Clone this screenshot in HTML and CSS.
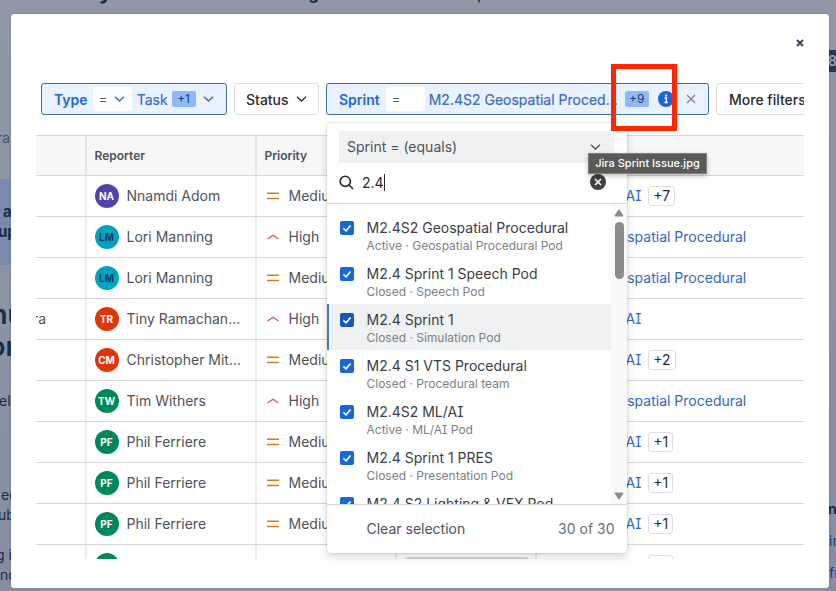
FILE: index.html
```
<!DOCTYPE html>
<html lang="en">
<head>
    <meta charset="UTF-8">
    <meta name="viewport" content="width=device-width, initial-scale=1.0">
    <title>Jira Sprint Issue.jpg</title>
    <link rel="stylesheet" href="styles.css">
</head>
<body>
    <!-- article behind the lightbox -->
    <div class="page">
        <div class="page-title"><span>y</span><span class="title-g">g</span><span class="title-p">p</span></div>
        <div class="page-left">
            <p class="meta">ra</p>
            <div class="note"><p>a</p><p>up</p></div>
            <h2><span>nu</span><br><span class="or">or</span></h2>
            <p class="line-el">el</p>
            <p class="line-ec">ec</p>
            <p class="line-ub">ub</p>
            <p class="line-g">g i</p>
            <p class="line-nc">nc</p>
        </div>
        <div class="page-right">
            <span class="count">8</span>
            <strong>n</strong>
            <a>in</a>
            <a>fr</a>
        </div>
    </div>

    <div class="modal">
        <div class="modal-head">
            <svg class="modal-close" width="8" height="8" viewBox="0 0 8 8"><path d="M1 1l6 6M7 1L1 7"/></svg>
        </div>
        <div class="shot">
            <div class="filters">
                <div class="filter active type">
                    <b>Type</b>
                    <span class="op">= <svg width="11" height="6" viewBox="0 0 11 6"><path d="M1 .8l4.5 4.2L10 .8"/></svg></span>
                    <span class="value">Task</span>
                    <span class="more">+1</span>
                    <svg class="chev" width="11" height="6" viewBox="0 0 11 6"><path d="M1 .8l4.5 4.2L10 .8"/></svg>
                </div>
                <div class="filter status">Status <svg width="11" height="6" viewBox="0 0 11 6"><path d="M1 .8l4.5 4.2L10 .8"/></svg></div>
                <div class="filter active sprint">
                    <b>Sprint</b>
                    <span class="op">=</span>
                    <span class="value">M2.4S2 Geospatial Proced...</span>
                    <span class="more">+9</span>
                    <svg class="info" width="16" height="16" viewBox="0 0 16 16"><circle cx="8" cy="8" r="8"/><path d="M6.5 7H8.3v4.5M6.5 11.6h3.4"/><rect x="7.2" y="3.6" width="1.9" height="1.9"/></svg>
                    <svg class="clear" width="10" height="10" viewBox="0 0 10 10"><path d="M1 1l8 8M9 1L1 9"/></svg>
                </div>
                <div class="filter more-filters">More filters</div>
            </div>

            <div class="table">
                <div class="row head"><div></div><div>Reporter</div><div>Priority</div><div></div><div></div></div>
                <div class="row"><div></div><div><i class="avatar purple">NA</i>Nnamdi Adom</div><div><svg class="medium" width="14" height="8" viewBox="0 0 14 8"><path d="M1 1.2h12M1 6.4h12"/></svg>Medium</div><div></div><div><a>M2.4S2 ML/AI</a><span class="tag">+7</span></div></div>
                <div class="row"><div></div><div><i class="avatar teal">LM</i>Lori Manning</div><div><svg class="high" width="14" height="8" viewBox="0 0 14 8"><path d="M1.5 6L7 2.2 12.5 6"/></svg>High</div><div></div><div><a>M2.4S2 Geospatial Procedural</a></div></div>
                <div class="row"><div></div><div><i class="avatar teal">LM</i>Lori Manning</div><div><svg class="medium" width="14" height="8" viewBox="0 0 14 8"><path d="M1 1.2h12M1 6.4h12"/></svg>Medium</div><div></div><div><a>M2.4S2 Geospatial Procedural</a></div></div>
                <div class="row"><div class="cut">ra</div><div><i class="avatar red">TR</i>Tiny Ramachan...</div><div><svg class="high" width="14" height="8" viewBox="0 0 14 8"><path d="M1.5 6L7 2.2 12.5 6"/></svg>High</div><div></div><div><a>M2.4S2 ML/AI</a></div></div>
                <div class="row"><div></div><div><i class="avatar red">CM</i>Christopher Mit...</div><div><svg class="medium" width="14" height="8" viewBox="0 0 14 8"><path d="M1 1.2h12M1 6.4h12"/></svg>Medium</div><div></div><div><a>M2.4S2 ML/AI</a><span class="tag">+2</span></div></div>
                <div class="row"><div></div><div><i class="avatar green">TW</i>Tim Withers</div><div><svg class="high" width="14" height="8" viewBox="0 0 14 8"><path d="M1.5 6L7 2.2 12.5 6"/></svg>High</div><div></div><div><a>M2.4S2 Geospatial Procedural</a></div></div>
                <div class="row"><div></div><div><i class="avatar green">PF</i>Phil Ferriere</div><div><svg class="medium" width="14" height="8" viewBox="0 0 14 8"><path d="M1 1.2h12M1 6.4h12"/></svg>Medium</div><div></div><div><a>M2.4S2 ML/AI</a><span class="tag">+1</span></div></div>
                <div class="row"><div></div><div><i class="avatar green">PF</i>Phil Ferriere</div><div><svg class="medium" width="14" height="8" viewBox="0 0 14 8"><path d="M1 1.2h12M1 6.4h12"/></svg>Medium</div><div></div><div><a>M2.4S2 ML/AI</a><span class="tag">+1</span></div></div>
                <div class="row"><div></div><div><i class="avatar green">PF</i>Phil Ferriere</div><div><svg class="medium" width="14" height="8" viewBox="0 0 14 8"><path d="M1 1.2h12M1 6.4h12"/></svg>Medium</div><div></div><div><a>M2.4S2 ML/AI</a><span class="tag">+1</span></div></div>
                <div class="row"><div></div><div><i class="avatar green"></i></div><div></div><div><span class="lozenge"></span></div><div><a>M2.4S2 ML/AI</a><span class="tag">+1</span></div></div>
            </div>
        </div>

        <div class="dropdown">
            <div class="operator">Sprint = (equals) <svg width="11" height="6" viewBox="0 0 11 6"><path d="M1 .8l4.5 4.2L10 .8"/></svg></div>
            <div class="search">
                <svg width="15" height="15" viewBox="0 0 15 15"><circle cx="6.3" cy="6.3" r="5.1"/><path d="M10 10l4 4"/></svg>
                <span class="query">2.4</span>
                <svg class="reset" width="16" height="16" viewBox="0 0 16 16"><circle cx="8" cy="8" r="8"/><path d="M5 5l6 6M11 5l-6 6"/></svg>
            </div>
            <div class="list">
                <div class="options">
                    <div class="option"><svg class="check" width="14" height="14" viewBox="0 0 14 14"><path d="M3.4 7.4l2.6 2.4 4.6-5.4"/></svg><div><p>M2.4S2 Geospatial Procedural</p><small>Active · Geospatial Procedural Pod</small></div></div>
                    <div class="option"><svg class="check" width="14" height="14" viewBox="0 0 14 14"><path d="M3.4 7.4l2.6 2.4 4.6-5.4"/></svg><div><p>M2.4 Sprint 1 Speech Pod</p><small>Closed · Speech Pod</small></div></div>
                    <div class="option focused"><svg class="check" width="14" height="14" viewBox="0 0 14 14"><path d="M3.4 7.4l2.6 2.4 4.6-5.4"/></svg><div><p>M2.4 Sprint 1</p><small>Closed · Simulation Pod</small></div></div>
                    <div class="option"><svg class="check" width="14" height="14" viewBox="0 0 14 14"><path d="M3.4 7.4l2.6 2.4 4.6-5.4"/></svg><div><p>M2.4 S1 VTS Procedural</p><small>Closed · Procedural team</small></div></div>
                    <div class="option"><svg class="check" width="14" height="14" viewBox="0 0 14 14"><path d="M3.4 7.4l2.6 2.4 4.6-5.4"/></svg><div><p>M2.4S2 ML/AI</p><small>Active · ML/AI Pod</small></div></div>
                    <div class="option"><svg class="check" width="14" height="14" viewBox="0 0 14 14"><path d="M3.4 7.4l2.6 2.4 4.6-5.4"/></svg><div><p>M2.4 Sprint 1 PRES</p><small>Closed · Presentation Pod</small></div></div>
                    <div class="option"><svg class="check" width="14" height="14" viewBox="0 0 14 14"><path d="M3.4 7.4l2.6 2.4 4.6-5.4"/></svg><div><p>M2.4 S2 Lighting &amp; VFX Pod</p></div></div>
                </div>
                <div class="scrollbar">
                    <svg width="10" height="8" viewBox="0 0 10 8"><path d="M5 1.2L8.8 6.8H1.2z"/></svg>
                    <span class="thumb"></span>
                    <svg width="10" height="8" viewBox="0 0 10 8"><path d="M5 6.8L8.8 1.2H1.2z"/></svg>
                </div>
            </div>
            <div class="footer"><span>Clear selection</span><span class="total">30 of 30</span></div>
        </div>

        <div class="highlight"></div>
        <div class="tooltip">Jira Sprint Issue.jpg</div>
    </div>
</body>
</html>
```
FILE: styles.css
```
* { box-sizing: border-box; }
body { margin: 0; width: 836px; height: 591px; overflow: hidden; position: relative; background-color: #9098a7; font-family: Inter, "Liberation Sans", sans-serif; font-size: 14px; color: #505258; }
p, h2 { margin: 0; }
svg { flex: none; fill: none; stroke: currentColor; stroke-width: 1.3; }

/* page behind */
.page { height: 591px; display: flex; justify-content: space-between; position: relative; overflow: hidden; color: #172b4d; }
.page-title { position: absolute; left: 99px; top: -22px; font-size: 22px; line-height: 26px; font-weight: 700; white-space: nowrap; }
.title-g { font-size: 17px; margin-left: 196px; }
.title-p { font-size: 17px; margin-left: 158px; font-weight: 400; }
.page-left { width: 40px; padding-top: 128px; background: linear-gradient(#9098a7, #868da2); }
.page-left p { height: 20px; line-height: 20px; white-space: nowrap; }
.page-left .meta { margin-left: -3px; color: #46536b; }
.note { height: 86px; margin-top: 31px; padding-top: 23px; background-color: #7989ab; font-weight: 700; font-size: 15px; }
.note p:first-child { padding-left: 3px; }
.note p:last-child { margin-left: -2px; }
.page-left h2 { margin: 34px 0 0 -9px; font-size: 27px; line-height: 32px; font-weight: 600; }
.or { margin-left: -2px; }
.page-left .line-el { margin-top: 28px; margin-left: -1px; }
.page-left .line-ec { margin-top: 74px; margin-left: 1px; }
.page-left .line-ub { margin-left: -2px; }
.page-left .line-g { margin-top: 20px; margin-left: -4px; }
.page-left .line-nc { margin-left: 0; }
.page-right { width: 10px; padding-top: 50px; display: flex; flex-direction: column; font-size: 14px; line-height: 32px; background: linear-gradient(#9098a7, #868da2); overflow: hidden; }
.count { height: 22px; line-height: 22px; padding-left: 2px; background-color: #253858; color: #9ba4b5; font-weight: 600; }
.page-right strong { margin-top: 421px; padding-left: 2px; height: 32px; }
.page-right a { color: #0b409c; padding-left: 3px; }

.modal { position: absolute; left: 11px; top: 14px; width: 818px; height: 574px; background-color: #fff; border-radius: 3px; box-shadow: 0 0 2px rgba(9,30,66,0.3); }
.modal-head { height: 69px; padding: 25px 25px 0 0; display: flex; justify-content: flex-end; }
.modal-close { color: #344563; stroke-width: 2; }
.shot { width: 768px; height: 476px; margin-left: 25px; overflow: hidden; }

/* filter bar */
.filters { height: 32px; margin-left: 5px; width: 900px; display: flex; gap: 7px; }
.filter { height: 32px; display: flex; align-items: center; border: 1px solid #dddee1; border-radius: 3px; color: #292a2e; font-weight: 500; white-space: nowrap; }
.filter.active { background-color: #e9f2fe; border-color: #3b6ea8; color: #1868db; font-weight: 400; }
.filter b { font-weight: 600; }
.filter.active .value { color: #3c6cc0; -webkit-text-stroke: 0.2px; }
.type { width: 186px; padding-left: 12px; }
.op { height: 24px; width: 39px; padding-left: 6px; background-color: #fff; border-radius: 2px; display: flex; align-items: center; gap: 7px; font-size: 13px; color: #44546f; }
.type .op { margin: 0 5px 0 5px; }
.op svg, .chev { color: #3f6a96; }
.more { height: 16px; width: 24px; line-height: 16px; text-align: center; background-color: #8fb8f6; border-radius: 2px; font-size: 12px; color: #1c3c6e; }
.type .more { margin: 0 7px 0 4px; }
.status { width: 85px; padding-left: 11px; gap: 7px; }
.sprint { width: 383px; padding-left: 12px; }
.sprint .op { margin: 0 4px 0 6px; color: #1868db; }
.sprint .more { margin-left: 7px; }
.info { margin-left: 9px; stroke: none; fill: #1868db; }
.info path { stroke: #fff; stroke-width: 1.5; fill: none; }
.info rect { fill: #fff; }
.clear { margin-left: 12px; color: #7d8590; }
.more-filters { width: 110px; padding-left: 12px; }

/* issue table */
.table { margin-top: 20px; border-top: 1px solid #d5d6d8; width: 768px; line-height: 18px; }
.row { height: 41px; display: grid; grid-template-columns: 51px 170px 140px 140px 1fr; border-bottom: 1px solid #d5d6d8; }
.row > div { display: flex; align-items: center; padding-left: 7.5px; border-right: 2px solid #ebecee; white-space: nowrap; }
.row > div:last-child { border-right: none; }
.row.head { height: 40px; background-color: #f7f7f7; font-size: 12px; font-weight: 600; color: #505258; }
.row.head > div { border-color: #e2e3e5; }
.row .cut { padding-left: 0; text-indent: -3px; }
.row a { color: #3267c4; font-feature-settings: "cv08"; }
.avatar { width: 24px; height: 24px; margin-right: 8px; border-radius: 50%; font-style: normal; font-size: 10px; line-height: 24px; text-align: center; font-weight: 700; color: #fff; }
.purple { background-color: #5243aa; }
.teal { background-color: #00a3bf; color: #103a63; }
.red { background-color: #de350b; }
.green { background-color: #00875a; }
.row .medium, .row .high { margin: 0 9px 0 1px; color: #d97a1c; stroke-width: 1.5; }
.row .high { color: #d9594c; stroke-width: 1.3; }
.tag { height: 20px; line-height: 18px; padding: 0 4px; margin-left: 7px; border: 1px solid #dddee1; border-radius: 3px; color: #292a2e; }
.lozenge { width: 124px; height: 16px; background-color: #d5d6d8; border-radius: 3px; }

/* sprint dropdown */
.dropdown { position: absolute; left: 316px; top: 109px; width: 300px; height: 430px; padding-top: 8px; background-color: #fff; border-radius: 4px; box-shadow: 0 4px 8px rgba(30,31,33,0.16), 0 0 2px rgba(30,31,33,0.25); }
.operator { height: 32px; margin: 0 13px 0 12px; padding: 0 13px 0 8px; display: flex; align-items: center; justify-content: space-between; background-color: #f0f1f2; line-height: 18px; }
.search { height: 41px; display: flex; align-items: center; padding: 0 21px 2px 12px; border-bottom: 1px solid #d5d6d8; color: #292a2e; }
.search svg { stroke-width: 1.6; }
.query { margin-left: 8px; border-right: 1px solid #292a2e; line-height: 17px; }
.search .reset { margin-left: auto; stroke: none; fill: #3f4145; }
.search .reset path { stroke: #fff; stroke-width: 1.6; }
.list { height: 300px; display: flex; overflow: hidden; }
.options { width: 284px; padding-top: 8px; }
.option { height: 46px; padding: 7px 0 0 12.5px; display: flex; gap: 13px; white-space: nowrap; }
.option p { line-height: 18px; color: #3b3d42; }
.option small { display: block; font-size: 12px; line-height: 17px; color: #7d7f85; }
.option { font-feature-settings: "cv08"; }
.check { margin-top: 2px; background-color: #1868db; border-radius: 2px; color: #fff; stroke-width: 1.6; }
.focused { background-color: #f0f1f2; border-left: 2px solid #3f7fc6; padding-left: 10.5px; }
.focused .check { background-color: #1558bc; }
.scrollbar { width: 16px; padding: 5px 0 4px; display: flex; flex-direction: column; align-items: center; background-color: #fafafa; color: #8b8b8b; }
.scrollbar svg { fill: currentColor; stroke-linejoin: round; }
.thumb { width: 9px; height: 57px; margin: 5px 0 auto; border-radius: 5px; background-color: #8b8b8b; }
.footer { height: 49px; padding: 0 12.5px 0 39.5px; display: flex; align-items: center; justify-content: space-between; border-top: 1px solid #d5d6d8; line-height: 18px; }
.total { color: #6b6e76; }

.highlight { position: absolute; left: 600px; top: 50px; width: 66px; height: 67px; border: 5px solid #ff2600; }
.tooltip { position: absolute; left: 577px; top: 139px; width: 119px; height: 21px; line-height: 19px; text-align: center; font-size: 11px; font-weight: 500; color: #fff; background-color: #5a5a58; border: 1px solid #80807e; box-shadow: 0 2px 5px rgba(0,0,0,0.25); white-space: nowrap; }
```
